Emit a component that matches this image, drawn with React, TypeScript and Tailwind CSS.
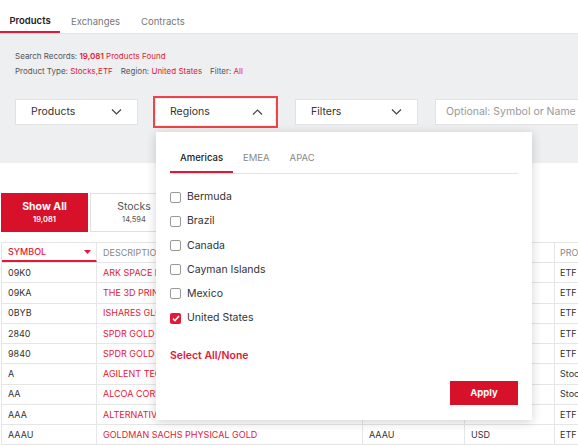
import React from 'react';

const rows = [
  { sym: '09K0', desc: 'ARK SPACE EXPLORATION & INNOVATION ETF', cur: 'USD', type: 'ETF' },
  { sym: '09KA', desc: 'THE 3D PRINTING ETF', cur: 'USD', type: 'ETF' },
  { sym: '0BYB', desc: 'ISHARES GLOBAL CLEAN ENERGY ETF', cur: 'USD', type: 'ETF' },
  { sym: '2840', desc: 'SPDR GOLD TRUST', cur: 'USD', type: 'ETF' },
  { sym: '9840', desc: 'SPDR GOLD TRUST', cur: 'USD', type: 'ETF' },
  { sym: 'A', desc: 'AGILENT TECHNOLOGIES INC', cur: 'USD', type: 'Stock' },
  { sym: 'AA', desc: 'ALCOA CORP', cur: 'USD', type: 'Stock' },
  { sym: 'AAA', desc: 'ALTERNATIVE ACCESS FIRST PRIORITY CLO', cur: 'USD', type: 'ETF' },
  { sym: 'AAAU', desc: 'GOLDMAN SACHS PHYSICAL GOLD', cur: 'USD', type: 'ETF' },
];

const regions = ['Bermuda', 'Brazil', 'Canada', 'Cayman Islands', 'Mexico', 'United States'];

function Chevron({ up = false }: { up?: boolean }) {
  return (
    <svg width="11" height="6" viewBox="0 0 11 6" fill="none" stroke="#444" strokeWidth="1.2">
      {up ? <path d="M1 5.5L5.5 1L10 5.5" /> : <path d="M1 0.5L5.5 5L10 0.5" />}
    </svg>
  );
}

export default function App() {
  return (
    <div className="relative w-[578px] h-[446px] overflow-hidden bg-white text-[#333]" style={{ fontFamily: 'Inter, "Open Sans", sans-serif' }}>
      {/* top tabs */}
      <div className="h-[34px] flex items-end border-b border-[#e4e4e4]">
        <div className="w-[60px] h-[34px] pt-[12px] flex items-center justify-center text-[9.5px] font-semibold text-[#222] border-b-2 border-[#e31837]">Products</div>
        <div className="ml-[11px] h-[34px] pt-[12px] flex items-center text-[9.5px] text-[#777]">Exchanges</div>
        <div className="ml-[21px] h-[34px] pt-[12px] flex items-center text-[9.5px] text-[#777]">Contracts</div>
      </div>

      {/* gray filter band */}
      <div className="h-[129px] bg-[#eeeff1] px-[15px] pt-[16px]">
        <div className="text-[8px] leading-[12px] text-[#555]">
          Search Records: <span className="text-[#e31837] font-semibold">19,081</span> <span className="text-[#e31837]">Products Found</span>
        </div>
        <div className="text-[8px] leading-[12px] mt-[3px] text-[#555]">
          Product Type: <span className="text-[#e31837]">Stocks,ETF</span>
          <span className="ml-[8px]">Region: </span><span className="text-[#e31837]">United States</span>
          <span className="ml-[8px]">Filter: </span><span className="text-[#e31837]">All</span>
        </div>
        <div className="flex items-center mt-[19px]">
          <div className="shrink-0 w-[123px] h-[26px] bg-white border border-[#e2e2e2] flex items-center justify-between px-[15px]">
            <span className="text-[10.5px] text-[#333]">Products</span>
            <Chevron />
          </div>
          <div className="shrink-0 ml-[15px] w-[125px] h-[32px] border-2 border-[#ee4448] p-[1px]">
            <div className="h-full bg-white flex items-center justify-between pl-[14px] pr-[12px]">
              <span className="text-[10.5px] text-[#333]">Regions</span>
              <Chevron up />
            </div>
          </div>
          <div className="shrink-0 ml-[17px] w-[123px] h-[26px] bg-white border border-[#e2e2e2] flex items-center justify-between px-[15px]">
            <span className="text-[10.5px] text-[#333]">Filters</span>
            <Chevron />
          </div>
          <div className="shrink-0 ml-[17px] w-[170px] h-[26px] bg-white border border-[#e2e2e2] flex items-center pl-[10px]">
            <span className="text-[10.5px] text-[#999] whitespace-nowrap">Optional: Symbol or Name</span>
          </div>
        </div>
      </div>

      {/* category buttons */}
      <div className="flex pl-[1px] mt-[30px] gap-[2px]">
        <div className="w-[87px] h-[39px] bg-[#d8112a] flex flex-col items-center justify-center text-white">
          <span className="text-[10.5px] font-bold leading-[13px]">Show All</span>
          <span className="text-[7.5px] font-semibold leading-[10px] mt-[2px]">19,081</span>
        </div>
        <div className="w-[88px] h-[39px] bg-white border border-[#e0e0e0] flex flex-col items-center justify-center text-[#555]">
          <span className="text-[10.5px] leading-[13px]">Stocks</span>
          <span className="text-[7.5px] leading-[10px] mt-[2px]">14,594</span>
        </div>
      </div>

      {/* table */}
      <div className="mt-[10px] ml-[1px] border-l border-[#e6e6e6] text-[9px]">
        <div className="flex h-[21px] border-t border-b border-[#e6e6e6]">
          <div className="w-[95px] flex items-center justify-between pl-[6px] pr-[5px] border-r border-[#e6e6e6] border-b-2 border-b-[#e31837] text-[#e31837] font-medium">
            <span>SYMBOL</span>
            <svg width="7" height="4" viewBox="0 0 7 4"><path d="M0 0H7L3.5 4Z" fill="#e31837" /></svg>
          </div>
          <div className="w-[266px] flex items-center pl-[6px] border-r border-[#e6e6e6] text-[#888]">DESCRIPTION</div>
          <div className="w-[102px] flex items-center pl-[6px] border-r border-[#e6e6e6] text-[#888]">EXCHANGE</div>
          <div className="w-[90px] flex items-center pl-[6px] border-r border-[#e6e6e6] text-[#888]">CURRENCY</div>
          <div className="flex-1 flex items-center pl-[5px] text-[#888] whitespace-nowrap overflow-hidden">PRODUCT</div>
        </div>
        {rows.map((r) => (
          <div key={r.sym} className="flex h-[20.25px] border-b border-[#e6e6e6]">
            <div className="w-[95px] flex items-center pl-[6px] border-r border-[#e6e6e6] text-[#333]">{r.sym}</div>
            <div className="w-[266px] flex items-center pl-[6px] border-r border-[#e6e6e6] text-[#e31837] whitespace-nowrap overflow-hidden">{r.desc}</div>
            <div className="w-[102px] flex items-center pl-[6px] border-r border-[#e6e6e6] text-[#333]">{r.sym}</div>
            <div className="w-[90px] flex items-center pl-[6px] border-r border-[#e6e6e6] text-[#333]">{r.cur}</div>
            <div className="flex-1 flex items-center pl-[5px] text-[#333] whitespace-nowrap overflow-hidden">{r.type}</div>
          </div>
        ))}
      </div>

      {/* regions dropdown panel */}
      <div className="absolute left-[156px] top-[132px] w-[376px] h-[288px] bg-white shadow-[0_2px_10px_rgba(0,0,0,0.18)] px-[14px]">
        <div className="flex mt-[19px] border-b border-[#e3e3e3]">
          <div className="px-[10px] h-[22px] flex items-start text-[9.5px] text-[#222] font-medium border-b-2 border-[#e31837] -mb-px">Americas</div>
          <div className="px-[10px] h-[22px] flex items-start text-[9.5px] text-[#888]">EMEA</div>
          <div className="px-[10px] h-[22px] flex items-start text-[9.5px] text-[#888]">APAC</div>
        </div>
        <div className="mt-[11px]">
          {regions.map((name) => {
            const checked = name === 'United States';
            return (
              <div key={name} className="h-[24.2px] flex items-center">
                {checked ? (
                  <div className="w-[11px] h-[11px] rounded-[2px] bg-[#e31837] flex items-center justify-center">
                    <svg width="8" height="7" viewBox="0 0 8 7" fill="none" stroke="white" strokeWidth="1.6">
                      <path d="M1 3.6L3 5.6L7 1" />
                    </svg>
                  </div>
                ) : (
                  <div className="w-[11px] h-[11px] rounded-[2px] border border-[#999] bg-white" />
                )}
                <span className="ml-[6px] text-[10.5px] text-[#333]">{name}</span>
              </div>
            );
          })}
        </div>
        <div className="mt-[20px] text-[10.5px] leading-[12px] font-semibold text-[#e31837]">Select All/None</div>
        <div className="flex justify-end mt-[19px]">
          <div className="w-[68px] h-[24px] bg-[#d8112a] flex items-center justify-center text-white text-[9.5px] font-bold">Apply</div>
        </div>
      </div>
    </div>
  );
}
